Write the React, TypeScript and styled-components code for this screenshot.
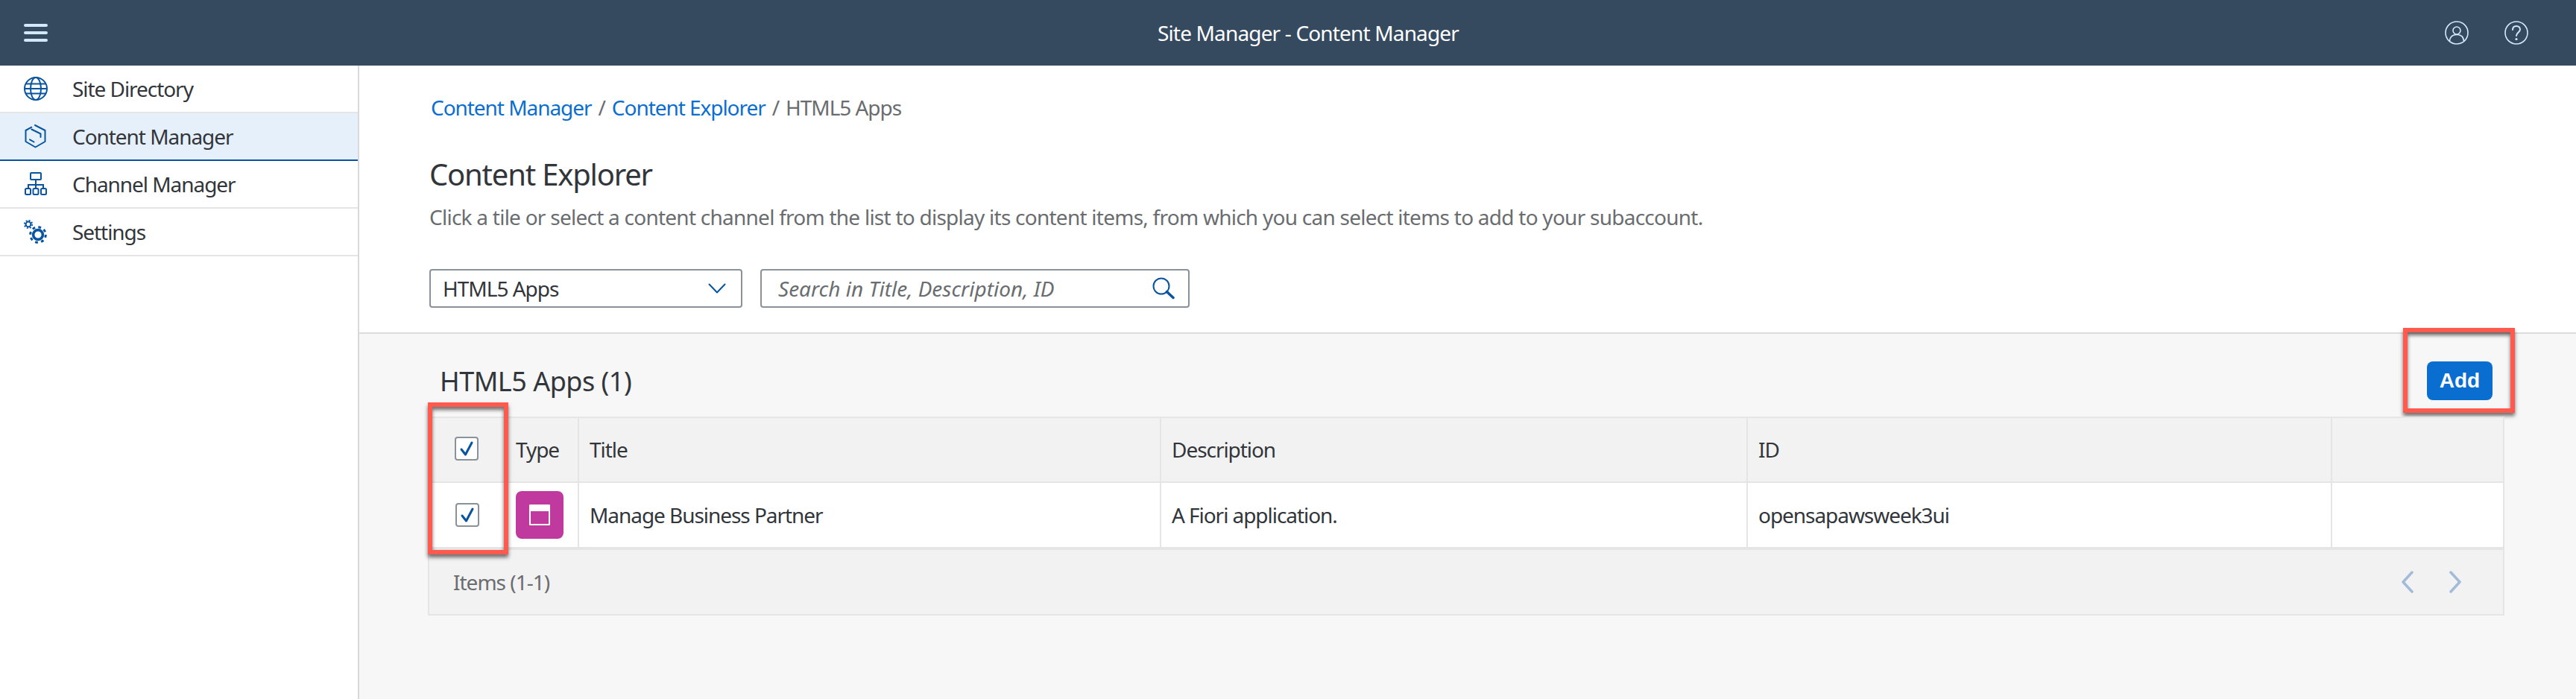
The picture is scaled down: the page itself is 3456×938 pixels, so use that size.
import React from "react";
import styled, { createGlobalStyle } from "styled-components";

const FONT = `"Noto Sans", "Open Sans", Arial, sans-serif`;

const GlobalStyle = createGlobalStyle`
  html, body {
    margin: 0;
    padding: 0;
    background: #fff;
    font-family: ${FONT};
    color: #32363a;
  }
  * { box-sizing: border-box; }
`;

const navItems = [
  { label: "Site Directory", icon: "globe" },
  { label: "Content Manager", icon: "cube", selected: true },
  { label: "Channel Manager", icon: "tree" },
  { label: "Settings", icon: "gears" },
];

const NavIcon = ({ name }: { name: string }) => {
  if (name === "globe") {
    return (
      <svg width="32" height="32" viewBox="0 0 32 32" fill="none" stroke="#0854a0" strokeWidth="2">
        <circle cx="16" cy="16" r="15" />
        <ellipse cx="16" cy="16" rx="7" ry="15" />
        <path d="M3 9.5h26M3 22.5h26M1 16h30" />
      </svg>
    );
  }
  if (name === "cube") {
    return (
      <svg width="32" height="32" viewBox="0 0 32 32" fill="none" stroke="#0854a0" strokeWidth="2" strokeLinejoin="round" strokeLinecap="round">
        <path d="M10.3 3.7 L2.5 8 V23 L15.5 30.5 L28.5 23 V8 L15 1" />
        <path d="M10.3 6.5 L22.5 12.5 V17" />
        <path d="M8 20.3 L13.5 23.5" />
      </svg>
    );
  }
  if (name === "tree") {
    return (
      <svg width="32" height="32" viewBox="0 0 32 32" fill="none" stroke="#0854a0" strokeWidth="2">
        <rect x="9" y="1" width="14" height="9" rx="1" />
        <path d="M16 10v12M6 22v-5h20v5" />
        <rect x="2" y="22" width="7" height="8" rx="1.5" />
        <rect x="12.5" y="22" width="7" height="8" rx="1.5" />
        <rect x="23" y="22" width="7" height="8" rx="1.5" />
      </svg>
    );
  }
  return (
    <svg width="32" height="32" viewBox="0 0 32 32" fill="none" stroke="#0854a0">
      <circle cx="6" cy="6" r="3.4" strokeWidth="2" />
      <circle cx="6" cy="6" r="5.2" strokeWidth="1.8" strokeDasharray="2 2.08" />
      <circle cx="19" cy="20" r="6.4" strokeWidth="3.6" />
      <circle cx="19" cy="20" r="10.3" strokeWidth="3" strokeDasharray="3.8 4.29" />
    </svg>
  );
};

const Check = () => (
  <svg width="20" height="22" viewBox="0 0 20 22" fill="none" stroke="#0854a0" strokeWidth="3" strokeLinecap="round" strokeLinejoin="round">
    <path d="M3 12 L8.5 19 L17 3" />
  </svg>
);

export default function App() {
  return (
    <Page>
      <GlobalStyle />
      <ShellBar>
        <ShellLeft>
          <svg width="32" height="24" viewBox="0 0 32 24" fill="#d1e8ff">
            <rect y="0" width="32" height="4" rx="2" />
            <rect y="10" width="32" height="4" rx="2" />
            <rect y="20" width="32" height="4" rx="2" />
          </svg>
        </ShellLeft>
        <ShellTitle>Site Manager - Content Manager</ShellTitle>
        <ShellRight>
          <svg width="32" height="32" viewBox="0 0 32 32" fill="none" stroke="#d1e8ff" strokeWidth="1.6">
            <circle cx="16" cy="16" r="15" />
            <circle cx="16" cy="13" r="5" />
            <path d="M6.5 27 C7 21 11 18.5 16 18.5 C21 18.5 25 21 25.5 27" />
          </svg>
          <svg width="32" height="32" viewBox="0 0 32 32" fill="none" stroke="#d1e8ff" strokeWidth="1.6">
            <circle cx="16" cy="16" r="15" />
            <path d="M11 12 C11 8.5 13.5 7 16 7 C19 7 21 9 21 11.5 C21 15.5 16 15.5 16 20" strokeWidth="2" strokeLinecap="round" />
            <circle cx="16" cy="24.5" r="1.6" fill="#d1e8ff" stroke="none" />
          </svg>
        </ShellRight>
      </ShellBar>
      <Body>
        <Sidebar>
          {navItems.map((item) => (
            <NavRow key={item.label} $selected={item.selected}>
              <NavIconSlot>
                <NavIcon name={item.icon} />
              </NavIconSlot>
              {item.label}
            </NavRow>
          ))}
        </Sidebar>
        <Main>
          <TopSection>
            <Breadcrumb>
              <CrumbLink>Content Manager</CrumbLink>
              <CrumbSep>/</CrumbSep>
              <CrumbLink>Content Explorer</CrumbLink>
              <CrumbSep>/</CrumbSep>
              HTML5 Apps
            </Breadcrumb>
            <PageTitle>Content Explorer</PageTitle>
            <Description>
              Click a tile or select a content channel from the list to display its content items, from which you can select items to add to your subaccount.
            </Description>
            <Controls>
              <SelectBox>
                HTML5 Apps
                <svg width="24" height="14" viewBox="0 0 24 14" fill="none" stroke="#0854a0" strokeWidth="2" strokeLinecap="round" strokeLinejoin="round">
                  <path d="M1.5 1.5 L12 12.5 L22.5 1.5" />
                </svg>
              </SelectBox>
              <SearchBox>
                Search in Title, Description, ID
                <svg width="30" height="30" viewBox="0 0 30 30" fill="none" stroke="#0854a0" strokeWidth="2">
                  <circle cx="12" cy="12" r="10.5" />
                  <path d="M19.5 19.5 L28 27.5" strokeWidth="3.5" strokeLinecap="round" />
                </svg>
              </SearchBox>
            </Controls>
          </TopSection>
          <BottomSection>
            <TableHead>
              <SectionTitle>HTML5 Apps (1)</SectionTitle>
              <AddWrap>
                <AddButton>Add</AddButton>
                <AddHighlight />
              </AddWrap>
            </TableHead>
            <TableWrap>
              <Table>
                <colgroup>
                  <col style={{ width: 102 }} />
                  <col style={{ width: 99 }} />
                  <col style={{ width: 781 }} />
                  <col style={{ width: 787 }} />
                  <col style={{ width: 784 }} />
                  <col />
                </colgroup>
                <thead>
                  <tr>
                    <Th>
                      <CheckBox $nudge={0}>
                        <Check />
                      </CheckBox>
                    </Th>
                    <Th>Type</Th>
                    <Th>Title</Th>
                    <Th>Description</Th>
                    <Th>ID</Th>
                    <Th />
                  </tr>
                </thead>
                <tbody>
                  <tr>
                    <Td>
                      <CheckBox $nudge={1}>
                        <Check />
                      </CheckBox>
                    </Td>
                    <Td>
                      <TypeTile>
                        <svg width="28" height="28" viewBox="0 0 28 28">
                          <path fill="#fff" fillRule="evenodd" d="M1 0 H27 A1 1 0 0 1 28 1 V27 A1 1 0 0 1 27 28 H1 A1 1 0 0 1 0 27 V1 A1 1 0 0 1 1 0 Z M2 9 V26 H26 V9 Z" />
                        </svg>
                      </TypeTile>
                    </Td>
                    <Td>Manage Business Partner</Td>
                    <Td>A Fiori application.</Td>
                    <Td>opensapawsweek3ui</Td>
                    <Td />
                  </tr>
                </tbody>
              </Table>
              <TableFooter>
                Items (1-1)
                <Pager>
                  <svg width="18" height="30" viewBox="0 0 18 30" fill="none" stroke="#a3bbd8" strokeWidth="3.5" strokeLinecap="round" strokeLinejoin="round">
                    <path d="M15 2 L3 15 L15 28" />
                  </svg>
                  <svg width="18" height="30" viewBox="0 0 18 30" fill="none" stroke="#a3bbd8" strokeWidth="3.5" strokeLinecap="round" strokeLinejoin="round">
                    <path d="M3 2 L15 15 L3 28" />
                  </svg>
                </Pager>
              </TableFooter>
              <CheckHighlight />
            </TableWrap>
          </BottomSection>
        </Main>
      </Body>
    </Page>
  );
}

const Page = styled.div`
  width: 3456px;
  height: 938px;
  display: flex;
  flex-direction: column;
  overflow: hidden;
`;

const ShellBar = styled.header`
  height: 88px;
  flex: none;
  display: grid;
  grid-template-columns: 230px 1fr 176px;
  align-items: center;
  background: #354a5f;
`;

const ShellLeft = styled.div`
  display: flex;
  padding-left: 32px;
`;

const ShellTitle = styled.div`
  text-align: center;
  color: #fff;
  font-size: 28px;
  letter-spacing: -0.84px;
`;

const ShellRight = styled.div`
  display: flex;
  gap: 48px;
`;

const Body = styled.div`
  flex: 1;
  display: flex;
  min-height: 0;
`;

const Sidebar = styled.nav`
  width: 482px;
  flex: none;
  border-right: 2px solid #d9d9d9;
`;

const NavRow = styled.div<{ $selected?: boolean }>`
  height: 64px;
  display: flex;
  align-items: center;
  font-size: 28px;
  letter-spacing: -1.05px;
  background: ${(p) => (p.$selected ? "#e5f0fa" : "#fff")};
  border-bottom: 2px solid ${(p) => (p.$selected ? "#0854a0" : "#e5e5e5")};
`;

const NavIconSlot = styled.span`
  width: 97px;
  flex: none;
  display: flex;
  padding-left: 32px;
`;

const Main = styled.main`
  flex: 1;
  display: flex;
  flex-direction: column;
  min-width: 0;
`;

const TopSection = styled.section`
  height: 360px;
  flex: none;
  padding: 36px 0 0 94px;
  border-bottom: 2px solid #dcdcdc;
`;

const Breadcrumb = styled.div`
  height: 40px;
  padding-left: 2px;
  display: flex;
  align-items: center;
  font-size: 28px;
  letter-spacing: -1.05px;
  color: #6a6d70;
`;

const CrumbLink = styled.a`
  color: #0a6ed1;
`;

const CrumbSep = styled.span`
  margin: 0 9px;
`;

const PageTitle = styled.h1`
  margin: 42px 0 0;
  height: 56px;
  line-height: 56px;
  font-size: 40px;
  font-weight: 400;
  letter-spacing: -1.2px;
`;

const Description = styled.p`
  margin: 11px 0 0;
  height: 36px;
  line-height: 36px;
  font-size: 28px;
  letter-spacing: -0.75px;
  color: #6a6d70;
`;

const Controls = styled.div`
  margin-top: 52px;
  display: flex;
  gap: 24px;
`;

const SelectBox = styled.div`
  width: 420px;
  height: 52px;
  display: flex;
  align-items: center;
  justify-content: space-between;
  padding: 0 20px 0 16px;
  border: 2px solid #89919a;
  border-radius: 4px;
  font-size: 28px;
  letter-spacing: -1px;
`;

const SearchBox = styled.div`
  width: 576px;
  height: 52px;
  display: flex;
  align-items: center;
  justify-content: space-between;
  padding: 0 18px 0 22px;
  border: 2px solid #89919a;
  border-radius: 4px;
  font-size: 28px;
  font-style: italic;
  color: #6a6d70;
`;

const BottomSection = styled.section`
  flex: 1;
  padding: 0 96px 0 92px;
  background: #f7f7f7;
`;

const TableHead = styled.div`
  height: 111px;
  display: flex;
  align-items: center;
  justify-content: space-between;
  padding: 15px 16px 0 16px;
`;

const SectionTitle = styled.h2`
  margin: 0;
  font-size: 36px;
  font-weight: 400;
  letter-spacing: -0.5px;
`;

const AddWrap = styled.div`
  position: relative;
  display: flex;
`;

const AddButton = styled.button`
  width: 88px;
  height: 52px;
  padding: 0;
  border: none;
  border-radius: 8px;
  background: #0a6ed1;
  color: #fff;
  font-family: "Liberation Sans", Arial, sans-serif;
  font-size: 28px;
  font-weight: 700;
`;

const Highlight = styled.div`
  position: absolute;
  border: 6px solid #ff5a4d;
  box-shadow: 0 4px 5px rgba(0, 0, 0, 0.55), inset 0 4px 5px rgba(0, 0, 0, 0.55);
  pointer-events: none;
`;

const AddHighlight = styled(Highlight)`
  left: -32px;
  top: -45px;
  width: 150px;
  height: 114px;
`;

const CheckHighlight = styled(Highlight)`
  left: 0;
  top: -19px;
  width: 108px;
  height: 204px;
`;

const TableWrap = styled.div`
  position: relative;
`;

const Table = styled.table`
  width: 100%;
  table-layout: fixed;
  border-collapse: collapse;
  font-size: 28px;
  letter-spacing: -1.05px;
`;

const Th = styled.th`
  height: 87px;
  padding: 0 14px 2px;
  background: #f2f2f2;
  border: 2px solid #e5e5e5;
  font-weight: 400;
  text-align: left;
`;

const Td = styled.td`
  height: 89px;
  padding: 0 14px;
  background: #fff;
  border: 2px solid #e5e5e5;
  border-bottom-width: 4px;
`;

const CheckBox = styled.div<{ $nudge: number }>`
  width: 32px;
  height: 32px;
  margin: ${(p) => (p.$nudge ? 0 : -2)}px 0 0 ${(p) => 20 + p.$nudge}px;
  display: flex;
  align-items: center;
  justify-content: center;
  background: #fff;
  border: 2px solid #89919a;
  border-radius: 4px;
`;

const TypeTile = styled.div`
  width: 64px;
  height: 64px;
  display: flex;
  align-items: center;
  justify-content: center;
  background: #c0399f;
  border-radius: 8px;
`;

const TableFooter = styled.div`
  height: 88px;
  display: flex;
  align-items: center;
  justify-content: space-between;
  padding: 0 55px 0 32px;
  background: #f2f2f2;
  border: 2px solid #e5e5e5;
  border-top: none;
  font-size: 28px;
  letter-spacing: -1px;
  color: #6a6d70;
`;

const Pager = styled.div`
  display: flex;
  gap: 46px;
`;
